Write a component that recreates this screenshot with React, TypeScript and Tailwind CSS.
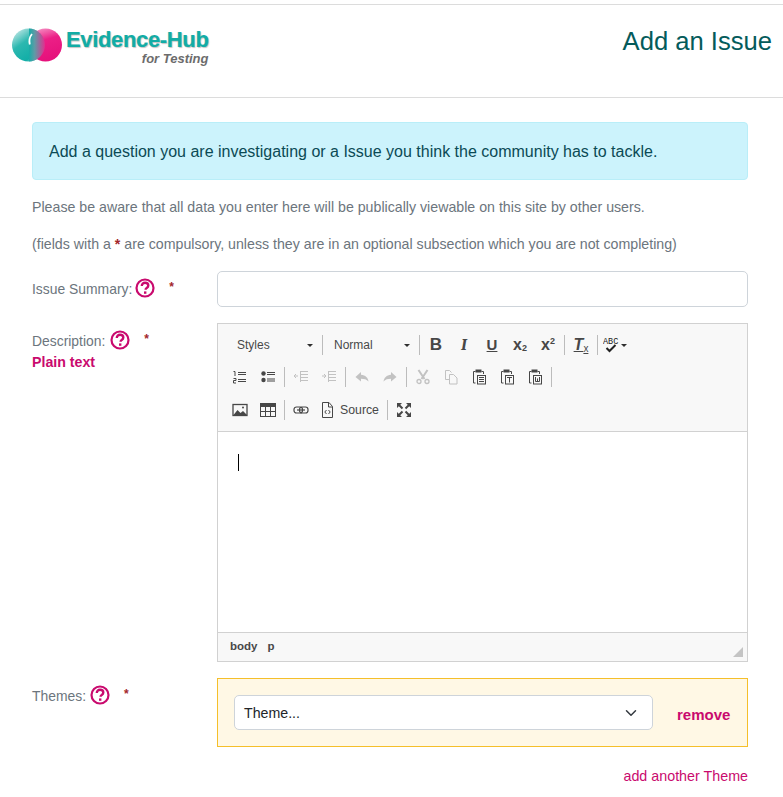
import { ReactNode } from "react";
import { ChevronDown } from "lucide-react";

const FONT = { fontFamily: '"Liberation Sans", Arial, sans-serif' };

function Help() {
  return (
    <svg width="20" height="20" viewBox="0 0 20 20" className="shrink-0">
      <circle cx="10" cy="10" r="8.5" fill="none" stroke="#c90a6e" strokeWidth="2.2" />
      <path
        d="M6.800 8c0-2.100 1.400-3.300 3.300-3.300 1.900 0 3.200 1.100 3.200 2.800 0 1.300-.7 1.900-1.600 2.500-.8.5-1.100.9-1.100 1.700"
        fill="none"
        stroke="#c90a6e"
        strokeWidth="2.400"
      />
      <rect x="9" y="13.400" width="2.400" height="2.400" fill="#c90a6e" />
    </svg>
  );
}

function Label({ text, gap = "mr-[3px]" }: { text: string; gap?: string }) {
  return (
    <div className="flex items-center text-[13.900px] text-[#6c757d]">
      <span className={`mt-[2px] ${gap}`}>{text}</span>
      <Help />
      <span className="-mt-[3px] ml-[14px] text-[12px] font-bold text-[#a3262b]">*</span>
    </div>
  );
}

function Sep() {
  return <span className="mx-[2px] h-[20px] w-px bg-[#bcbcbc]" />;
}

// 16x16 toolbar icons
function Tool({ children, off }: { children: ReactNode; off?: boolean }) {
  return (
    <span className={`flex h-[22px] w-[28px] items-center justify-center ${off ? "opacity-30" : ""}`}>
      <svg width="16" height="16" viewBox="0 0 16 16" fill="none" stroke="#474747" strokeWidth="1.300">
        {children}
      </svg>
    </span>
  );
}

function Clipboard({ children }: { children: ReactNode }) {
  return (
    <Tool>
      <path d="M4.500 2.500H2.500v11.500h2" strokeWidth="1" />
      <path d="M10.500 2.500h2V5" strokeWidth="1" />
      <rect x="4.500" y="0.500" width="6" height="3" fill="#474747" stroke="none" />
      <rect x="6.500" y="6.500" width="8" height="8.500" strokeWidth="1" />
      {children}
    </Tool>
  );
}

function TextTool({ children, className }: { children: ReactNode; className?: string }) {
  return (
    <span className={`flex h-[22px] w-[28px] items-center justify-center text-[#474747] ${className ?? ""}`}>
      {children}
    </span>
  );
}

function Combo({ label, w, pl }: { label: string; w: string; pl: string }) {
  return (
    <span className={`flex h-[22px] ${w} ${pl} items-center justify-between pr-[7px] text-[12px] text-[#484848]`}>
      {label}
      <span className="h-0 w-0 border-x-[3px] border-t-[3px] border-x-transparent border-t-[#2f2f2f]" />
    </span>
  );
}

function Toolbar() {
  return (
    <div className="flex h-[108px] flex-col gap-[11px] border-b border-[#d1d1d1] bg-[#f8f8f8] pt-[10px] pl-[9px]">
      <div className="-mb-[1px] flex items-center">
        <Combo label="Styles" w="w-[93px]" pl="pl-[10px]" />
        <Sep />
        <Combo label="Normal" w="w-[92px]" pl="pl-[9px]" />
        <Sep />
        <TextTool className="text-[17px] font-bold">B</TextTool>
        <TextTool className="font-serif text-[17px] font-bold italic">I</TextTool>
        <TextTool className="text-[15px] font-bold underline">U</TextTool>
        <TextTool className="text-[16px] leading-none font-bold">
          x<span className="mt-[7px] text-[9px]">2</span>
        </TextTool>
        <TextTool className="text-[16px] leading-none font-bold">
          x<span className="-mt-[7px] text-[9px]">2</span>
        </TextTool>
        <Sep />
        <TextTool className="text-[16px] font-bold italic underline">
          T<span className="mt-[7px] text-[10px] font-normal not-italic">x</span>
        </TextTool>
        <Sep />
        <span className="flex h-[22px] w-[28px] items-center pl-[3px]">
          <svg width="17" height="17" viewBox="0 0 17 17" fill="none">
            <text x="0" y="7" fontSize="8.500" fontFamily="Liberation Mono" fill="#222">
              ABC
            </text>
            <path d="M3.500 11l3 3 6-6" stroke="#222" strokeWidth="2" />
          </svg>
          <span className="ml-[1px] h-0 w-0 border-x-[3px] border-t-[3px] border-x-transparent border-t-[#2f2f2f]" />
        </span>
      </div>
      <div className="-ml-[1px] flex items-center">
        <Tool>
          <path d="M6 3.500h8M6 5.500h8M6 10.500h8M6 12.500h8" strokeWidth="1" />
          <path d="M1.500 2.500h1.500v4.500M1.500 9.500h2.500v2H1.500v2.500h2.500" strokeWidth="1" />
        </Tool>
        <Tool>
          <circle cx="3.500" cy="4.500" r="2.200" fill="#474747" stroke="none" />
          <circle cx="3.500" cy="11" r="2.200" fill="#474747" stroke="none" />
          <path d="M7 3.500h8M7 5.500h8M7 10h8M7 12h8" strokeWidth="1" />
        </Tool>
        <Sep />
        <Tool off>
          <path d="M7 2.500h8M7 5.500h8M7 8.500h8M7 11.500h8M7.500 2v11M1 7h4M3 5l-2 2 2 2" strokeWidth="1" />
        </Tool>
        <Tool off>
          <path d="M7 2.500h8M7 5.500h8M7 8.500h8M7 11.500h8M7.500 2v11M1 7h4M3 5l2 2-2 2" strokeWidth="1" />
        </Tool>
        <Sep />
        <Tool off>
          <path d="M7 3 1.500 8 7 12.500V9.800c3.500 0 5.500.7 7.500 2.700-.5-3.800-3-6.300-7.500-6.800z" fill="#474747" stroke="none" />
        </Tool>
        <Tool off>
          <path d="M9 3l5.500 5L9 12.500V9.800c-3.500 0-5.500.7-7.500 2.700.5-3.800 3-6.300 7.500-6.800z" fill="#474747" stroke="none" />
        </Tool>
        <Sep />
        <Tool off>
          <path d="M3.500 1l6 9M12.500 1l-6 9" strokeWidth="2" />
          <circle cx="4" cy="12.500" r="2" />
          <circle cx="12" cy="12.500" r="2" />
        </Tool>
        <Tool off>
          <path d="M6.500 10.500h-4v-9h4l2 2" strokeWidth="1" />
          <path d="M6.500 5.500h4l3.500 3.500v6H6.500z" strokeWidth="1" />
        </Tool>
        <Clipboard>
          <path d="M8 8.500h5M8 10.500h5M8 12.500h5" strokeWidth="1" />
        </Clipboard>
        <Clipboard>
          <path d="M8 8.500h5M10.500 8.500v5" strokeWidth="1" />
        </Clipboard>
        <Clipboard>
          <path d="M8.500 8v4.500h4V8M10.500 9.500v3" strokeWidth="1" />
        </Clipboard>
        <Sep />
      </div>
      <div className="-ml-[1px] flex items-center">
        <Tool>
          <rect x="1" y="2.500" width="14" height="11" />
          <path d="M1.500 13l4-5 3 3 2.500-2 4 4z" fill="#474747" stroke="none" />
          <circle cx="11" cy="5.500" r="1" fill="#474747" stroke="none" />
        </Tool>
        <Tool>
          <rect x="0.500" y="1.500" width="15" height="13" strokeWidth="1" />
          <rect x="0.500" y="1.500" width="15" height="3.500" fill="#474747" stroke="none" />
          <path d="M5.500 5v9M10.500 5v9M1 9.500h14" strokeWidth="1" />
        </Tool>
        <Sep />
        <Tool>
          <rect x="1" y="5" width="8.500" height="6" rx="2.500" strokeWidth="1.200" />
          <rect x="6.500" y="5" width="8.500" height="6" rx="2.500" strokeWidth="1.200" />
          <path d="M4 8h8" strokeWidth="1.200" />
        </Tool>
        <span className="flex h-[22px] items-center gap-[6px] pr-[6px] pl-[6px] text-[12.300px] text-[#484848]">
          <svg width="13" height="16" viewBox="0 0 13 16" fill="none" stroke="#474747" strokeWidth="1">
            <path d="M1.500.5h6.500l3.500 4v11h-10z" />
            <path d="M7.500.5v4.500h4" />
            <path d="M5.500 8 3.800 10l1.700 2M7.500 8l1.700 2-1.700 2" />
          </svg>
          Source
        </span>
        <Sep />
        <Tool>
          <path d="M1 6V1h5zM15 6V1h-5zM1 10v5h5zM15 10v5h-5z" fill="#474747" stroke="none" />
          <path d="M3 3l3.500 3.500M13 3 9.500 6.500M3 13l3.500-3.500M13 13l-3.500-3.500" strokeWidth="2" />
        </Tool>
      </div>
    </div>
  );
}

function Logo() {
  return (
    <svg width="50" height="34" viewBox="0 0 50 34" className="mt-[1px] shrink-0">
      <defs>
        <linearGradient id="left" x1="0" y1="0" x2="0.7" y2="1">
          <stop offset="0" stopColor="#e4f2f2" />
          <stop offset="0.45" stopColor="#2cb8b0" />
          <stop offset="0.85" stopColor="#12aea7" />
          <stop offset="1" stopColor="#8ad6d2" />
        </linearGradient>
        <linearGradient id="right" x1="0" y1="0" x2="0.3" y2="1">
          <stop offset="0" stopColor="#f7a6cf" />
          <stop offset="0.45" stopColor="#ec1f86" />
          <stop offset="1" stopColor="#e6127c" />
        </linearGradient>
        <linearGradient id="mix" x1="0" y1="0" x2="1" y2="0">
          <stop offset="0" stopColor="#16ada8" />
          <stop offset="0.35" stopColor="#5f9aa6" />
          <stop offset="1" stopColor="#e0308f" />
        </linearGradient>
        <clipPath id="overlap">
          <circle cx="16.500" cy="17" r="16.500" />
        </clipPath>
      </defs>
      <circle cx="16.500" cy="17" r="16.500" fill="url(#left)" />
      <circle cx="33.500" cy="17" r="16.500" fill="url(#right)" />
      <rect x="17" y="0" width="16" height="34" fill="url(#mix)" clipPath="url(#overlap)" />
      <path d="M20 6c-2.500 3-3 7-2.200 10.500" fill="none" stroke="#fff" strokeWidth="1.800" />
    </svg>
  );
}

export default function App() {
  return (
    <div className="min-h-[797px] overflow-hidden bg-white" style={FONT}>
      {/* header */}
      <div className="mt-1 flex h-[94px] justify-between border-y border-[#dcdcdc] pr-[11px] pl-[12px]">
        <div className="mt-[22px] flex h-[42px] w-[200px]">
          <Logo />
          <div className="ml-[4px] flex flex-col">
            <span className="text-[22px] leading-[26px] font-bold tracking-[-0.35px] whitespace-nowrap text-[#12aca5] [-webkit-text-stroke:0.2px_#12aca5] [text-shadow:1px_1px_1px_#c4c4c4]">
              Evidence-Hub
            </span>
            <span className="-mt-[1px] text-right text-[13px] leading-[14px] font-bold text-[#6c6c6c] italic">
              for Testing
            </span>
          </div>
        </div>
        <h1 className="mt-[20px] text-[25.600px] leading-[32px] text-[#045b5b]">Add an Issue</h1>
      </div>

      <div className="pr-[35px] pl-[32px]">
        <div className="mt-[24px] flex h-[58px] items-center rounded-[4px] border border-[#b9eef8] bg-[#ccf3fc] pt-[2px] pl-4 text-[16px] text-[#0b4a55]">
          Add a question you are investigating or a Issue you think the community has to tackle.
        </div>
        <p className="mt-[18px] text-[14.200px] leading-[18px] text-[#6c757d]">
          Please be aware that all data you enter here will be publically viewable on this site by other users.
        </p>
        <p className="mt-[19px] text-[14.200px] leading-[18px] text-[#6c757d]">
          (fields with a <span className="font-bold text-[#a3262b]">*</span> are compulsory, unless they are in an
          optional subsection which you are not completing)
        </p>

        <div className="mt-[18px] flex">
          <div className="w-[185px] pt-[6px]">
            <Label text="Issue Summary:" />
          </div>
          <div className="h-[36px] flex-1 rounded-[5px] border border-[#ced4da]" />
        </div>

        <div className="mt-[16px] flex">
          <div className="w-[185px] pt-[6px]">
            <Label text="Description:" gap="mr-[5px]" />
            <div className="text-[14.200px] font-bold text-[#c90a6e]">Plain text</div>
          </div>
          <div className="flex h-[339px] flex-1 flex-col border border-[#d1d1d1]">
            <Toolbar />
            <div className="flex-1 pt-[22px] pl-[20px]">
              <div className="h-[17px] w-px bg-black" />
            </div>
            <div className="relative flex h-[29px] items-center gap-[10px] border-t border-[#d1d1d1] bg-[#f8f8f8] pl-3 text-[11.500px] font-bold text-[#484848]">
              <span>body</span>
              <span>p</span>
              <span className="absolute right-[4px] bottom-[4px] h-0 w-0 border-b-[10px] border-l-[10px] border-b-[#c4c4c4] border-l-transparent" />
            </div>
          </div>
        </div>

        <div className="mt-[16px] flex">
          <div className="w-[185px] pt-[6px]">
            <Label text="Themes:" gap="mr-[4px]" />
          </div>
          <div className="flex h-[69px] flex-1 items-center border border-[#f5bf2a] bg-[#fff8e5] pl-4">
            <div className="flex h-[35px] w-[419px] items-center justify-between rounded-[5px] border border-[#ced4da] bg-white pr-[12px] pl-[9px] text-[14.200px] text-[#212529]">
              <span className="mt-[2px]">Theme...</span>
              <ChevronDown size={18} strokeWidth={2} className="text-[#343a40]" />
            </div>
            <span className="mt-[5px] ml-[24px] text-[15px] font-bold text-[#c90a6e]">remove</span>
          </div>
        </div>

        <div className="mt-[19px] text-right text-[14.300px] text-[#c90a6e]">add another Theme</div>
      </div>
    </div>
  );
}
